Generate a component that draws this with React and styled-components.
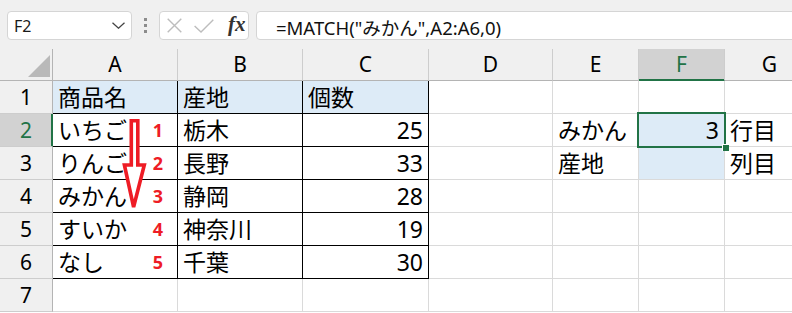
import React from "react";
import styled, { createGlobalStyle, css } from "styled-components";

const GREEN = "#217346";
const GRID = "#dadada";
const HEAD_BG = "#f0f0f0";
const HEAD_SEP = "#cdcdcd";
const HEAD_EDGE = "#b4b4b4";
const BLUE = "#ddebf7";
const RED = "#ee1c25";

const GlobalStyle = createGlobalStyle`
  html, body {
    margin: 0;
    padding: 0;
    background: #fff;
    overflow: hidden;
  }
  body {
    font-family: "Noto Sans", "Noto Sans CJK JP", sans-serif;
    color: #000;
  }
`;

const Page = styled.div`
  position: relative;
  width: 792px;
  height: 313px;
  overflow: hidden;
`;

const FormulaBar = styled.div`
  display: flex;
  align-items: flex-start;
  height: 49px;
  box-sizing: border-box;
  padding: 11px 0 0 7px;
  background: ${HEAD_BG};
`;

const Box = styled.div`
  box-sizing: border-box;
  height: 29px;
  background: #fff;
  border: 1px solid #d5d5d5;
  border-radius: 4px;
  display: flex;
  align-items: center;
`;

const NameBox = styled(Box)`
  width: 125px;
  justify-content: space-between;
  padding: 0 6px 0 6px;
  font-size: 16px;
  color: #1a1a1a;
`;

const Grip = styled.div`
  width: 27px;
  height: 29px;
  display: flex;
  flex-direction: column;
  align-items: center;
  justify-content: center;
  gap: 3px;

  span {
    display: block;
    width: 3px;
    height: 3px;
    background: #8c8c8c;
  }
`;

const ButtonBox = styled(Box)`
  width: 90px;
  padding-left: 7px;
`;

const Fx = styled.span`
  margin-left: 14px;
  font-family: "Liberation Serif", serif;
  font-style: italic;
  font-weight: bold;
  font-size: 21px;
  color: #333;
  line-height: 1;
  margin-top: -2px;
`;

const FormulaInput = styled(Box)`
  flex: 1;
  margin-left: 7px;
  margin-right: -10px;
  padding: 2px 0 0 19px;
  font-size: 18.5px;
  color: #111;
  white-space: nowrap;
`;

const Sheet = styled.div`
  display: grid;
  grid-template-columns: 53px 125px 125px 126px 124px 86px 86px 90px;
  grid-template-rows: 32px repeat(7, 33px);
  width: 815px;
`;

const baseCell = css`
  box-sizing: border-box;
  display: flex;
  align-items: center;
  position: relative;
  line-height: 1;
`;

const Corner = styled.div`
  ${baseCell};
  background: ${HEAD_BG};
  border-right: 1px solid ${HEAD_EDGE};
  border-bottom: 1px solid ${HEAD_EDGE};

  &::after {
    content: "";
    position: absolute;
    right: 2px;
    bottom: 3px;
    width: 0;
    height: 0;
    border-left: 22px solid transparent;
    border-bottom: 22px solid #b9b9b9;
  }
`;

const ColHead = styled.div`
  ${baseCell};
  justify-content: center;
  font-size: 21px;
  background: ${HEAD_BG};
  border-right: 1px solid ${HEAD_SEP};
  border-bottom: 1px solid ${HEAD_EDGE};
  ${(p) =>
    p.$selected &&
    css`
      background: #d2d2d2;
      color: ${GREEN};
      border-bottom-color: ${GREEN};
      box-shadow: inset 0 -1px 0 ${GREEN};
    `}
`;

const RowHead = styled.div`
  ${baseCell};
  justify-content: center;
  font-size: 21px;
  background: ${HEAD_BG};
  border-right: 1px solid ${HEAD_EDGE};
  border-bottom: 1px solid ${HEAD_SEP};
  ${(p) =>
    p.$selected &&
    css`
      background: #d2d2d2;
      color: ${GREEN};
      border-right-color: ${GREEN};
      box-shadow: inset -1px 0 0 ${GREEN};
    `}
`;

const Cell = styled.div`
  ${baseCell};
  padding: 0 5px;
  font-size: 23px;
  white-space: nowrap;
  justify-content: ${(p) => (p.$right ? "flex-end" : "space-between")};
  background: ${(p) => (p.$fill ? BLUE : "#fff")};
  border-right: 1px solid ${(p) => (p.$table ? "#000" : GRID)};
  border-bottom: 1px solid ${(p) => (p.$table ? "#000" : GRID)};
  z-index: ${(p) => (p.$active ? 3 : "auto")};
`;

const Mark = styled.span`
  margin-right: 9px;
  font-size: 18px;
  font-weight: bold;
  color: ${RED};
`;

const Selection = styled.div`
  position: absolute;
  top: -2px;
  left: -2px;
  right: -2px;
  bottom: -2px;
  border: 2px solid ${GREEN};
  pointer-events: none;

  &::after {
    content: "";
    position: absolute;
    right: -5px;
    bottom: -5px;
    width: 6px;
    height: 6px;
    background: ${GREEN};
    border-left: 1px solid #fff;
    border-top: 1px solid #fff;
  }
`;

const Overlay = styled.svg`
  position: absolute;
  top: 0;
  left: 0;
  pointer-events: none;
  z-index: 5;
`;

const Chevron = () => (
  <svg width="13" height="7" viewBox="0 0 13 7">
    <polyline points="0.5,0.8 6.5,6.2 12.5,0.8" fill="none" stroke="#444" strokeWidth="1.3" />
  </svg>
);

const CancelIcon = () => (
  <svg width="15" height="15" viewBox="0 0 15 15">
    <path d="M0.7 0.7 L14.3 14.3 M14.3 0.7 L0.7 14.3" stroke="#bdbdbd" strokeWidth="1.4" />
  </svg>
);

const EnterIcon = () => (
  <svg width="20" height="14" viewBox="0 0 20 14" style={{ marginLeft: 12 }}>
    <polyline points="0.6,7 7,13 19.3,0.7" fill="none" stroke="#bdbdbd" strokeWidth="1.4" />
  </svg>
);

const columns = ["A", "B", "C", "D", "E", "F", "G"];

const table = [
  ["商品名", "産地", "個数"],
  ["いちご", "栃木", 25],
  ["りんご", "長野", 33],
  ["みかん", "静岡", 28],
  ["すいか", "神奈川", 19],
  ["なし", "千葉", 30],
];

const side = {
  2: ["みかん", 3, "行目"],
  3: ["産地", "", "列目"],
};

const renderRow = (r) => {
  const cells = [];
  const data = table[r - 1];
  const extra = side[r];
  columns.forEach((col, i) => {
    const key = `${col}${r}`;
    if (data && i < 3) {
      const value = data[i];
      const isNum = typeof value === "number";
      cells.push(
        <Cell key={key} $table $fill={r === 1} $right={isNum}>
          <span>{value}</span>
          {i === 0 && r > 1 && <Mark>{r - 1}</Mark>}
        </Cell>
      );
      return;
    }
    if (extra && i >= 4) {
      const value = extra[i - 4];
      const isF = col === "F";
      cells.push(
        <Cell key={key} $fill={isF} $right={isF} $active={isF && r === 2}>
          <span>{value}</span>
          {isF && r === 2 && <Selection />}
        </Cell>
      );
      return;
    }
    cells.push(<Cell key={key} />);
  });
  return cells;
};

export default function App() {
  const rows = [1, 2, 3, 4, 5, 6, 7];
  return (
    <Page>
      <GlobalStyle />
      <FormulaBar>
        <NameBox>
          <span>F2</span>
          <Chevron />
        </NameBox>
        <Grip>
          <span />
          <span />
          <span />
        </Grip>
        <ButtonBox>
          <CancelIcon />
          <EnterIcon />
          <Fx>fx</Fx>
        </ButtonBox>
        <FormulaInput>=MATCH("みかん",A2:A6,0)</FormulaInput>
      </FormulaBar>
      <Sheet>
        <Corner />
        {columns.map((c) => (
          <ColHead key={c} $selected={c === "F"}>
            {c}
          </ColHead>
        ))}
        {rows.map((r) => (
          <React.Fragment key={r}>
            <RowHead $selected={r === 2}>{r}</RowHead>
            {renderRow(r)}
          </React.Fragment>
        ))}
      </Sheet>
      <Overlay width="792" height="313" viewBox="0 0 792 313">
        <polygon
          points="131.3,120.8 137.8,120.8 137.8,165 144.3,165 133.6,207 124.4,165 131.3,165"
          fill="#fff"
          stroke={RED}
          strokeWidth="3.6"
          strokeLinejoin="miter"
        />
      </Overlay>
    </Page>
  );
}
